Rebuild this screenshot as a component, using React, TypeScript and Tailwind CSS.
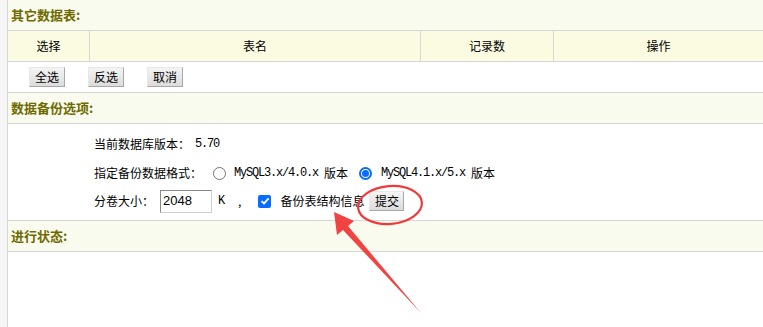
import React from "react";

const cjk = { fontFamily: '"SimSun","Noto Sans CJK SC",sans-serif' };
const mono = { fontFamily: '"Liberation Mono","Noto Sans CJK SC",monospace', letterSpacing: "-1.2px" };

function Btn({ children, w }: { children: React.ReactNode; w: string }) {
  return (
    <button className={`${w} h-[20px] border border-[#a8a8a8] border-t-[#e8e8e8] border-l-[#e8e8e8] bg-gradient-to-b from-[#f4f4f4] to-[#dcdcdc] text-[12px] text-black leading-none flex items-center justify-center`} style={cjk}>
      {children}
    </button>
  );
}

function Title({ children }: { children: React.ReactNode }) {
  return (
    <div className="h-[31px] flex items-center pl-[3px] bg-[#f9fbee] border-b border-[#d6d6d6] text-[13px] font-bold text-[#6e6a00]" style={cjk}>
      {children}
    </div>
  );
}

export default function App() {
  return (
    <div className="relative w-[763px] h-[327px] overflow-hidden bg-[#f5f5f5] flex" style={cjk}>
      <div className="w-[7px] shrink-0" />
      <div className="flex-1 bg-white border-l border-[#d8d8d8] flex flex-col">
        <Title>其它数据表:</Title>
        <div className="h-[31px] grid grid-cols-[82px_331px_133px_1fr] bg-[#fbfbe2] border-b border-[#d6d6d6] text-[12px] text-black">
          <div className="flex items-center justify-center border-r border-[#d6d6d6]">选择</div>
          <div className="flex items-center justify-center border-r border-[#d6d6d6]">表名</div>
          <div className="flex items-center justify-center border-r border-[#d6d6d6]">记录数</div>
          <div className="flex items-center justify-center">操作</div>
        </div>
        <div className="h-[31px] flex items-center gap-[23px] pl-[21px] border-b border-[#d6d6d6]">
          <Btn w="w-[36px]">全选</Btn>
          <Btn w="w-[36px]">反选</Btn>
          <Btn w="w-[36px]">取消</Btn>
        </div>
        <Title>数据备份选项:</Title>
        <div className="h-[97px] border-b border-[#d6d6d6] pl-[86px] pt-[10px] flex flex-col text-[12px] text-black">
          <div className="h-[20px] flex items-center">
            <span>当前数据库版本：</span>
            <span className="ml-[5px] text-[12px]" style={mono}>5.70</span>
          </div>
          <div className="h-[20px] mt-[9px] flex items-center">
            <span>指定备份数据格式：</span>
            <span className="ml-[11px] w-[13px] h-[13px] rounded-full border border-[#767676] bg-white" />
            <span className="ml-[8px] text-[12px]" style={mono}>MySQL3.x/4.0.x</span>
            <span className="ml-[6px]">版本</span>
            <span className="ml-[11px] w-[13px] h-[13px] rounded-full border-[2px] border-[#0a6cff] bg-white flex items-center justify-center">
              <span className="w-[7px] h-[7px] rounded-full bg-[#0a6cff]" />
            </span>
            <span className="ml-[9px] text-[12px]" style={mono}>MySQL4.1.x/5.x</span>
            <span className="ml-[6px]">版本</span>
          </div>
          <div className="h-[24px] mt-[6px] flex items-center">
            <span>分卷大小：</span>
            <span className="ml-[6px] w-[52px] h-[23px] border border-[#8a8a8a] border-r-[#d0d0d0] border-b-[#d0d0d0] bg-white flex items-center pl-[2px] text-[13px]" style={{ fontFamily: '"Liberation Sans",sans-serif' }}>2048</span>
            <span className="ml-[6px] text-[12px]" style={mono}>K</span>
            <span className="ml-[14px]">,</span>
            <span className="ml-[17px] w-[13px] h-[13px] rounded-[2px] bg-[#0a6cff] flex items-center justify-center">
              <svg width="10" height="10" viewBox="0 0 10 10"><path d="M1.5 5.2 L4 7.5 L8.6 2.3" stroke="white" strokeWidth="1.8" fill="none" /></svg>
            </span>
            <span className="ml-[9px]">备份表结构信息</span>
            <span className="ml-[5px]"><Btn w="w-[35px]">提交</Btn></span>
          </div>
        </div>
        <Title>进行状态:</Title>
        <div className="flex-1" />
      </div>
      <svg className="absolute left-0 top-0 pointer-events-none" width="763" height="327">
        <ellipse cx="390" cy="205" rx="32" ry="19" fill="none" stroke="#f03a3a" strokeWidth="2.2" transform="rotate(-5 390 205)" />
        <polygon points="334,212 354,221 348,226 421,313 343,230 337,235" fill="#f24343" />
      </svg>
    </div>
  );
}
